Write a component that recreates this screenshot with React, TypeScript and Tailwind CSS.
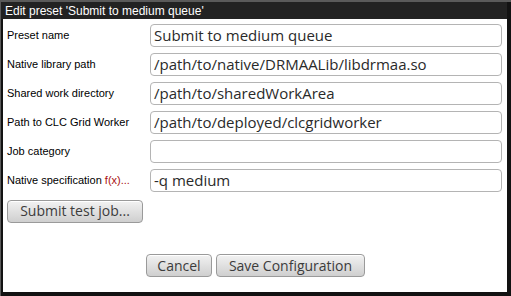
import React from "react";

const rows: { label: string; value: string; fx?: boolean }[] = [
  { label: "Preset name", value: "Submit to medium queue" },
  { label: "Native library path", value: "/path/to/native/DRMAALib/libdrmaa.so" },
  { label: "Shared work directory", value: "/path/to/sharedWorkArea" },
  { label: "Path to CLC Grid Worker", value: "/path/to/deployed/clcgridworker" },
  { label: "Job category", value: "" },
  { label: "Native specification", value: "-q medium", fx: true },
];

const btn =
  "h-[23px] rounded-[4px] border border-[#9a9a9a] bg-gradient-to-b from-[#f2f2f2] to-[#cfcfcf] text-[#3c3c3c] text-[14px] leading-none px-[9px] [font-family:'Open_Sans',sans-serif] shadow-[inset_0_1px_0_#fff]";

export default function App() {
  return (
    <div className="w-[511px] h-[296px] bg-[#121212] border-t-2 border-l border-[#5a5a5a] flex flex-col">
      <div className="h-[17px] bg-[#222222] mr-[4px] flex items-center pl-[4px] text-white text-[12px] [font-family:'Liberation_Sans',Arial,sans-serif]">
        Edit preset 'Submit to medium queue'
      </div>
      <div className="flex-1 bg-white ml-[2px] mr-[4px] mb-[4px] pt-[5px] pl-[4px] pr-[5px] flex flex-col">
        <div className="grid grid-cols-[143px_1fr] gap-y-[6px] items-center">
          {rows.map((r) => (
            <React.Fragment key={r.label}>
              <div className="text-[11px] text-black [font-family:'Liberation_Sans',Arial,sans-serif]">
                {r.label}
                {r.fx && <span className="text-[#aa1111]"> f(x)...</span>}
              </div>
              <div className="h-[23px] rounded-[4px] border border-[#b4b4b4] bg-white flex items-center pl-[3px] text-[15px] text-[#2a2a2a] [font-family:'Open_Sans',sans-serif] whitespace-nowrap overflow-hidden">
                {r.value}
              </div>
            </React.Fragment>
          ))}
        </div>
        <div className="mt-[6px]">
          <button className={`${btn} w-[136px]`}>Submit test job...</button>
        </div>
        <div className="flex-1" />
        <div className="flex justify-center gap-[4px] mb-[15px] pl-[2px]">
          <button className={`${btn} w-[66px]`}>Cancel</button>
          <button className={`${btn} w-[149px]`}>Save Configuration</button>
        </div>
      </div>
    </div>
  );
}
